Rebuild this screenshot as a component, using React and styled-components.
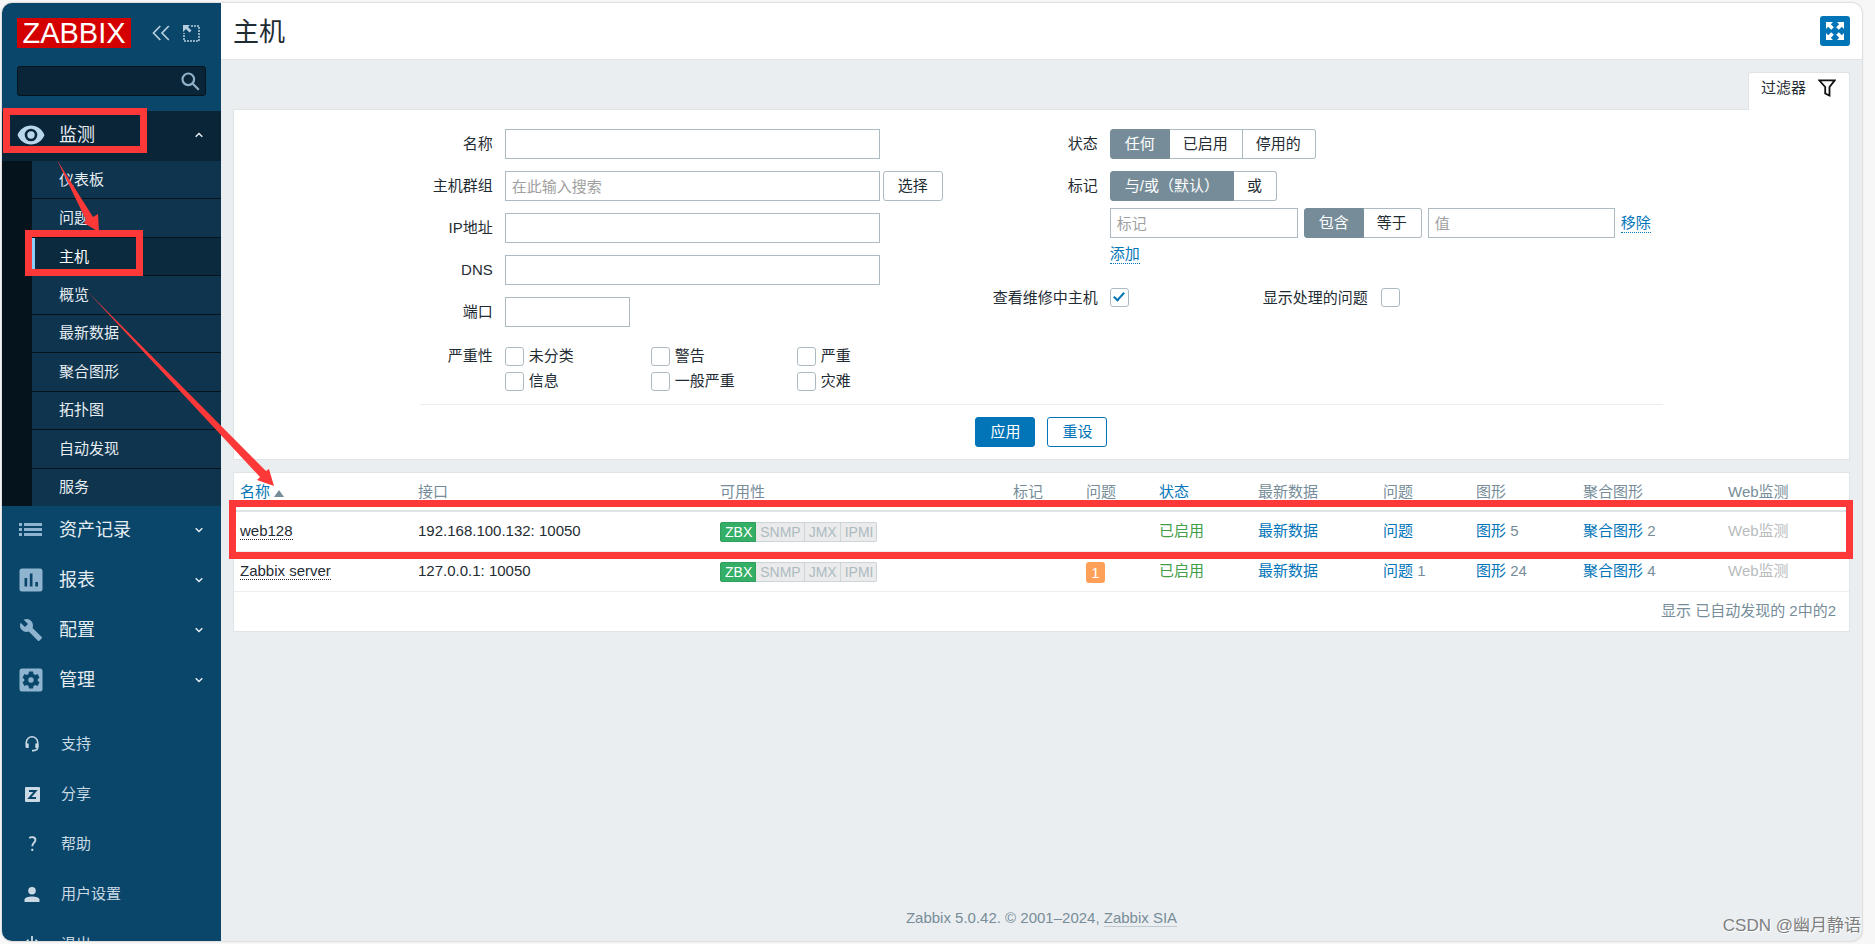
import React from 'react'
import styled, { createGlobalStyle, css } from 'styled-components'

const GlobalStyle = createGlobalStyle`
    *, *::before, *::after{
        box-sizing: border-box;
    }

    body{
        margin: 0;
        background: #f7f7f7;
        color: #1f2c33;
        font-family: "Liberation Sans", "Noto Sans CJK SC", sans-serif;
        font-size: 15px;
        line-height: 20px;
    }

    button, input{
        font: inherit;
        color: inherit;
    }

    a{
        text-decoration: none;
    }
`;

const Window = styled.div`
    position: relative;
    height: 100vh;
    padding: 3px 13px 3px 2px;
    overflow: hidden;
`;

const Frame = styled.div`
    display: flex;
    height: 100%;
    overflow: hidden;
    border-radius: 10px;
    background: #ebeef0;
    box-shadow: 0 0 2px rgba(0, 0, 0, .35);
`;

/* ---------- sidebar ---------- */

const Sidebar = styled.aside`
    flex: none;
    width: 219px;
    overflow: hidden;
    background: #0a466a;
    color: #e6edf2;
`;

const Brand = styled.div`
    display: flex;
    align-items: center;
    padding: 15px 15px 0;
`;

const Logo = styled.a`
    flex: none;
    width: 114px;
    height: 30px;
    margin-right: 21px;
    background: #d40000;
    color: #fff;
    font-size: 29px;
    line-height: 31px;
    text-align: center;
`;

const BrandButton = styled.button`
    display: flex;
    flex: none;
    margin-right: 13px;
    padding: 0;
    border: 0;
    background: none;
    color: #b6cede;
`;

const Search = styled.form`
    display: flex;
    align-items: center;
    height: 30px;
    margin: 18px 15px 15px;
    border: 1px solid #04131c;
    border-radius: 3px;
    background: #0a2537;

    input{
        flex: 1;
        min-width: 0;
        padding: 0 8px;
        border: 0;
        outline: 0;
        background: none;
        color: #fff;
    }

    button{
        display: flex;
        padding: 0 5px;
        border: 0;
        background: none;
        color: #8fb0c6;
    }
`;

const MenuLink = styled.a`
    display: flex;
    align-items: center;
    height: 50px;
    padding: 0 18px 2px 14px;
    color: #e6edf2;
    font-size: 18px;
    background: ${({ $open }) => $open ? '#0a2537' : 'none'};

    .icon{
        display: flex;
        justify-content: center;
        width: 30px;
        margin-right: 13px;
        color: ${({ $open }) => $open ? '#b9d7ea' : '#8fb4cf'};
    }

    .label{
        flex: 1;
    }
`;

const SubMenu = styled.nav`
    display: flex;
    flex-direction: column;
    height: 345px;
    padding-left: 30px;
    background: #04131c;
`;

const SubLink = styled.a`
    display: flex;
    flex: 1;
    align-items: center;
    padding-left: 27px;
    border-bottom: 1px solid #04131c;
    background: #0f344d;
    color: #e6edf2;

    ${({ $active }) => $active && css`
        padding-left: 24px;
        border-left: 3px solid #87cefa;
        background: #0b2a3e;
        color: #fff;
    `}

    &:last-child{
        border-bottom: 0;
    }
`;

const UserMenu = styled.nav`
    margin-top: 13px;
`;

const UserLink = styled.a`
    display: flex;
    align-items: center;
    height: 50px;
    padding-left: 22px;
    color: #c9dae5;

    .icon{
        display: flex;
        justify-content: center;
        width: 16px;
        margin-right: 21px;
    }
`;

/* ---------- page ---------- */

const Page = styled.main`
    display: flex;
    flex: 1;
    flex-direction: column;
    min-width: 0;
`;

const Header = styled.header`
    display: flex;
    align-items: center;
    justify-content: space-between;
    height: 57px;
    padding: 0 12px;
    border-bottom: 1px solid #dfe4e7;
    background: #fff;

    h1{
        margin: 0;
        padding-top: 2px;
        font-size: 26px;
        font-weight: 400;
        line-height: 36px;
    }
`;

const FullscreenButton = styled.button`
    display: flex;
    align-items: center;
    justify-content: center;
    width: 30px;
    height: 30px;
    margin-bottom: 1px;
    padding: 0;
    border: 0;
    border-radius: 3px;
    background: #0275b8;
    color: #fff;
`;

const Content = styled.div`
    flex: 1;
    padding: 12px 12px 0;
`;

const TabRow = styled.div`
    display: flex;
    justify-content: flex-end;
`;

const FilterTab = styled.button`
    display: flex;
    align-items: center;
    gap: 12px;
    height: 38px;
    margin-bottom: -1px;
    padding: 0 13px 8px 12px;
    border: 1px solid #dfe4e7;
    border-bottom: 0;
    border-radius: 3px 3px 0 0;
    background: #fff;
    z-index: 1;
`;

const Panel = styled.section`
    border: 1px solid #dfe4e7;
    background: #fff;
`;

const FilterBody = styled.form`
    width: 77%;
    min-width: 1243px;
    margin: 0 auto;
    padding: 19px 0 12px;
`;

const Columns = styled.div`
    display: flex;
    gap: 50px;
    padding-bottom: 13px;
    border-bottom: 1px solid #ebeef0;
`;

const FormColumn = styled.div`
    display: grid;
    grid-template-columns: ${({ $label }) => $label}px auto;
    column-gap: 12px;
    row-gap: 12px;
    align-content: start;
`;

const Label = styled.label`
    line-height: 29px;
    text-align: right;
    white-space: nowrap;
`;

const Field = styled.div`
    display: flex;
    align-items: center;
    gap: ${({ $gap }) => $gap || 0}px;
`;

const TextInput = styled.input`
    width: ${({ $width }) => $width}px;
    height: 30px;
    padding: 0 6px;
    border: 1px solid #acbbc2;
    border-radius: 0;
    background: #fff;

    &::placeholder{
        color: #a0a0a0;
        opacity: 1;
    }
`;

const Button = styled.button`
    width: 60px;
    height: 30px;
    padding: 0;
    border: 1px solid ${({ $kind }) => $kind ? '#0275b8' : '#acbbc2'};
    border-radius: 3px;
    background: ${({ $kind }) => $kind === 'primary' ? '#0275b8' : '#fff'};
    color: ${({ $kind }) => $kind === 'primary' ? '#fff' : $kind ? '#0275b8' : '#1f2c33'};
`;

const Segments = styled.div`
    display: flex;
    height: 30px;

    label{
        position: relative;
        padding: 0 14px 0 13px;
        border: 1px solid #acbbc2;
        border-left-width: 0;
        line-height: 28px;
        white-space: nowrap;
    }

    label:first-child{
        padding-left: 14px;
        border-left-width: 1px;
        border-radius: 3px 0 0 3px;
    }

    label:last-child{
        border-radius: 0 3px 3px 0;
    }

    label:has(input:checked){
        border-color: #768d99;
        background: #768d99;
        color: #fff;
    }

    input{
        position: absolute;
        inset: 0;
        margin: 0;
        opacity: 0;
    }
`;

const SeverityLabel = styled.span`
    margin-top: 7px;
    text-align: right;
`;

const Severities = styled.div`
    display: grid;
    grid-template-columns: repeat(3, 146px);
    row-gap: 5px;
    width: 438px;
    margin-top: 7px;

    label{
        display: flex;
        align-items: center;
        gap: 5px;
        height: 20px;
    }
`;

const Checkbox = styled.input`
    flex: none;
    width: 19px;
    height: 19px;
    margin: 0;
    appearance: none;
    border: 1px solid #acbbc2;
    border-radius: 3px;
    background: #fff;

    &:checked::after{
        content: "";
        display: block;
        width: 6px;
        height: 11px;
        margin: 1px auto 0;
        border: solid #0275b8;
        border-width: 0 2px 2px 0;
        transform: rotate(42deg);
    }
`;

const DottedLink = styled.a`
    border-bottom: 1px dotted;
    color: ${({ $dark }) => $dark ? '#1f2c33' : '#0275b8'};
    line-height: 18px;
`;

const TagRows = styled.div`
    display: flex;
    flex-direction: column;
    align-items: flex-start;
    gap: 7px;
`;

const Maintenance = styled(Field)`
    margin-top: 7px;

    label{
        margin: 0 13px 0 134px;
    }
`;

const MaintenanceLabel = styled(Label)`
    margin-top: 7px;
`;

const Actions = styled.div`
    display: flex;
    justify-content: center;
    gap: 12px;
    padding-top: 12px;
`;

/* ---------- hosts table ---------- */

const TablePanel = styled(Panel)`
    margin-top: 12px;
`;

const Table = styled.table`
    width: 100%;
    border-collapse: collapse;
    table-layout: fixed;

    th, td{
        padding: 0 6px;
        text-align: left;
        font-weight: 400;
        white-space: nowrap;
    }

    th{
        height: 38px;
        border-bottom: 2px solid #dfe4e7;
        color: #768d99;
    }

    td{
        height: 40px;
        border-bottom: 1px solid #ebeef0;
    }

    tfoot td{
        padding-right: 13px;
        border-bottom: 0;
        color: #768d99;
        text-align: right;
    }
`;

const Col = styled.col`
    width: ${({ $width }) => $width}px;
`;

const SortArrow = styled.span`
    display: inline-block;
    margin-left: 4px;
    border: 5px solid transparent;
    border-top: 0;
    border-bottom: 7px solid #768d99;
`;

const Link = styled.a`
    color: #0275b8;
`;

const Enabled = styled.a`
    color: #429e47;
`;

const Muted = styled.span`
    color: ${({ $light }) => $light ? '#b8bcbe' : '#768d99'};
`;

const Availability = styled.span`
    display: inline-flex;
    vertical-align: middle;

    span{
        height: 20px;
        padding: 0 3px 0 4px;
        border: 1px solid #ccd5d9;
        border-left-width: 0;
        background: #ebebeb;
        color: #acbbc2;
        font-size: 14px;
        line-height: 18px;
    }

    span:first-child{
        border: 1px solid #2f9f5e;
        border-radius: 2px 0 0 2px;
        background: #34af67;
        color: #fff;
    }

    span:last-child{
        border-radius: 0 2px 2px 0;
    }
`;

const ProblemCount = styled.a`
    display: inline-block;
    width: 19px;
    margin-top: 3px;
    border-radius: 3px;
    background: #ffa059;
    color: #fff;
    line-height: 21px;
    text-align: center;
`;

const Footer = styled.footer`
    padding-bottom: 13px;
    color: #768d99;
    text-align: center;

    a{
        border-bottom: 1px solid #c0cad0;
        color: #768d99;
    }
`;

const Watermark = styled.div`
    position: absolute;
    right: 14px;
    bottom: 6px;
    color: #7d7f80;
    font-size: 17px;
    line-height: 24px;
    text-shadow: 1px 1px 0 #fff;
`;

const Marks = styled.svg`
    position: absolute;
    top: 0;
    left: 0;
    pointer-events: none;
`;

const subItems = ['仪表板', '问题', '主机', '概览', '最新数据', '聚合图形', '拓扑图', '自动发现', '服务'];

const severities = ['未分类', '警告', '严重', '信息', '一般严重', '灾难'];

const columns = [
    { title: '名称', width: 178, sort: true, arrow: true },
    { title: '接口', width: 302 },
    { title: '可用性', width: 293 },
    { title: '标记', width: 73 },
    { title: '问题', width: 73 },
    { title: '状态', width: 99, sort: true },
    { title: '最新数据', width: 125 },
    { title: '问题', width: 93 },
    { title: '图形', width: 107 },
    { title: '聚合图形', width: 145 },
    { title: 'Web监测', width: 127 },
];

const hosts = [
    { name: 'web128', address: '192.168.100.132: 10050', graphs: 5, screens: 2 },
    { name: 'Zabbix server', address: '127.0.0.1: 10050', problems: 1, graphs: 24, screens: 4 },
];

const EyeIcon = () => (
    <svg width="28" height="20" viewBox="0 0 28 20" fill="currentColor">
        <path fillRule="evenodd" d="M14 0.5C7.8 0.5 2.6 4.400 0.500 10c2.100 5.600 7.300 9.500 13.500 9.500S25.400 15.600 27.500 10C25.400 4.400 20.200 0.500 14 0.500zm0 3.200a6.300 6.300 0 1 1 0 12.600 6.300 6.300 0 0 1 0-12.600zm0 2.600a3.700 3.700 0 1 0 0 7.400 3.700 3.700 0 0 0 0-7.400z" />
    </svg>
)

const ListIcon = () => (
    <svg width="24" height="14" viewBox="0 0 24 14" fill="currentColor">
        <path d="M0 0h3v3H0zM5 0h18v3H5zM0 5h3v3H0zM5 5h18v3H5zM0 10h3v3H0zM5 10h18v3H5z" />
    </svg>
)

const ChartIcon = () => (
    <svg width="24" height="24" viewBox="0 0 24 24" fill="currentColor">
        <path fillRule="evenodd" d="M3 .5h18A2.500 2.500 0 0 1 23.500 3v18a2.500 2.500 0 0 1-2.500 2.500H3A2.500 2.500 0 0 1 .5 21V3A2.500 2.500 0 0 1 3 .5zM5.500 10v8.500h2.700V10zm5.300-4.500v13h2.700v-13zm5.500 8.500v4.500H19V14z" />
    </svg>
)

const WrenchIcon = () => (
    <svg width="24" height="24" viewBox="0 0 24 24" fill="currentColor">
        <path d="M22.700 19l-9.100-9.100c.9-2.300.4-5-1.500-6.900-2-2-5-2.400-7.400-1.300L9 6 6 9 1.600 4.700C.4 7.100.9 10.100 2.900 12.100c1.900 1.900 4.600 2.400 6.900 1.500l9.100 9.100c.4.4 1 .4 1.400 0l2.300-2.300c.5-.4.5-1.100.1-1.400z" />
    </svg>
)

const GearIcon = () => (
    <svg width="24" height="24" viewBox="0 0 24 24" fill="currentColor">
        <path fillRule="evenodd" d="M3 .5h18A2.500 2.500 0 0 1 23.500 3v18a2.500 2.500 0 0 1-2.500 2.500H3A2.500 2.500 0 0 1 .5 21V3A2.500 2.500 0 0 1 3 .5zM10 3.500l-.5 2.400-1.700 1-2.300-.8-2 3.500L5.300 11.200v1.600L3.500 14.400l2 3.500 2.300-.8 1.700 1 .5 2.400h4l.5-2.400 1.700-1 2.300.8 2-3.500-1.800-1.600v-1.600l1.800-1.600-2-3.500-2.300.8-1.700-1-.5-2.400zm2 5.800a2.700 2.700 0 1 1 0 5.400 2.700 2.700 0 0 1 0-5.400z" />
    </svg>
)

const HeadsetIcon = () => (
    <svg width="14" height="16" viewBox="0 0 14 16" fill="none" stroke="currentColor" strokeWidth="1.600">
        <path d="M1.300 8V6.500a5.700 5.700 0 0 1 11.400 0V11c0 2.200-1.500 3.600-4.200 3.600H7" />
        <path d="M.5 7.500h3.200V12H2A1.500 1.500 0 0 1 .5 10.500zM13.500 7.500h-3.200V12H12a1.500 1.500 0 0 0 1.500-1.500z" fill="currentColor" stroke="none" />
    </svg>
)

const ShareIcon = () => (
    <svg width="15" height="15" viewBox="0 0 15 15">
        <rect width="15" height="15" rx="1" fill="currentColor" />
        <path d="M4 4h6.500L4.500 11H11" fill="none" stroke="#0a466a" strokeWidth="2" />
    </svg>
)

const HelpIcon = () => (
    <svg width="9" height="16" viewBox="0 0 9 16" fill="none" stroke="currentColor" strokeWidth="1.900">
        <path d="M1.200 1.900C3.500.6 7.400.7 7.400 3.900c0 2.700-3.100 2.900-3.100 6.300M4.300 12.700v2.200" />
    </svg>
)

const UserIcon = () => (
    <svg width="16" height="15" viewBox="0 0 16 15" fill="currentColor">
        <circle cx="8" cy="3.800" r="3.800" />
        <path d="M.5 15v-2.200C.5 10.600 4.500 9.600 8 9.600s7.500 1 7.500 3.200V15z" />
    </svg>
)

const PowerIcon = () => (
    <svg width="14" height="16" viewBox="0 0 14 16" fill="none" stroke="currentColor" strokeWidth="1.800">
        <path d="M7 0v8M3.500 3.800a6 6 0 1 0 7 0" />
    </svg>
)

const Chevron = ({ up }) => (
    <svg width="8" height="6" viewBox="0 0 8 6" fill="none" stroke="currentColor" strokeWidth="1.500">
        <path d={up ? 'M.7 4.800L4 1.500l3.300 3.300' : 'M.7 1.200L4 4.500l3.300-3.300'} />
    </svg>
)

const CollapseIcon = () => (
    <svg width="18" height="16" viewBox="0 0 18 16" fill="none" stroke="currentColor" strokeWidth="1.700">
        <path d="M8.300 1L1.500 8l6.800 7M16.800 1L10 8l6.800 7" />
    </svg>
)

const HideIcon = () => (
    <svg width="17" height="17" viewBox="0 0 17 17" fill="none" stroke="currentColor" strokeWidth="1.500">
        <path d="M8 1h8v15H1V8" strokeDasharray="2 1" />
        <path d="M0 0h7L5 2l3.500 3.500-2 2L3 4 0 7z" fill="currentColor" stroke="none" />
    </svg>
)

const SearchIcon = () => (
    <svg width="19" height="19" viewBox="0 0 19 19" fill="none" stroke="currentColor" strokeWidth="2.200">
        <circle cx="7.300" cy="7.300" r="5.800" />
        <path d="M11.500 11.500l6.300 6.300" />
    </svg>
)

const FullscreenIcon = () => (
    <svg width="18" height="18" viewBox="0 0 18 18" fill="currentColor">
        <path d="M0 0h7L4.800 2.200l3 3-2.600 2.600-3-3L0 7zM18 0v7l-2.200-2.200-3 3-2.600-2.600 3-3L11 0zM0 18v-7l2.200 2.200 3-3 2.600 2.600-3 3L7 18zM18 18h-7l2.200-2.200-3-3 2.600-2.600 3 3L18 11z" />
    </svg>
)

const FunnelIcon = () => (
    <svg width="18" height="18" viewBox="0 0 18 18" fill="none" stroke="#111" strokeWidth="1.800">
        <path d="M1.300 1.400h15.400L11.500 8v8.500l-4.300-2V8z" />
    </svg>
)

const menuItems = [
    { label: '资产记录', icon: <ListIcon /> },
    { label: '报表', icon: <ChartIcon /> },
    { label: '配置', icon: <WrenchIcon /> },
    { label: '管理', icon: <GearIcon /> },
];

const userItems = [
    { label: '支持', icon: <HeadsetIcon /> },
    { label: '分享', icon: <ShareIcon /> },
    { label: '帮助', icon: <HelpIcon /> },
    { label: '用户设置', icon: <UserIcon /> },
    { label: '退出', icon: <PowerIcon /> },
];

function SegmentedControl({ name, label, options }) {
    return (
        <Segments role="radiogroup" aria-label={label}>
            {options.map((option, i) => (
                <label key={option}>
                    <input type="radio" name={name} defaultChecked={i === 0} />
                    {option}
                </label>
            ))}
        </Segments>
    )
}

function SideNav() {
    return (
        <Sidebar>
            <Brand>
                <Logo href="#">ZABBIX</Logo>
                <BrandButton aria-label="收起"><CollapseIcon /></BrandButton>
                <BrandButton aria-label="隐藏"><HideIcon /></BrandButton>
            </Brand>
            <Search>
                <input type="text" aria-label="搜索" />
                <button type="button" aria-label="搜索"><SearchIcon /></button>
            </Search>
            <MenuLink href="#" $open>
                <span className="icon"><EyeIcon /></span>
                <span className="label">监测</span>
                <Chevron up />
            </MenuLink>
            <SubMenu>
                {subItems.map((item) => (
                    <SubLink key={item} href="#" $active={item === '主机'}>{item}</SubLink>
                ))}
            </SubMenu>
            {menuItems.map(({ label, icon }) => (
                <MenuLink key={label} href="#">
                    <span className="icon">{icon}</span>
                    <span className="label">{label}</span>
                    <Chevron />
                </MenuLink>
            ))}
            <UserMenu>
                {userItems.map(({ label, icon }) => (
                    <UserLink key={label} href="#">
                        <span className="icon">{icon}</span>
                        {label}
                    </UserLink>
                ))}
            </UserMenu>
        </Sidebar>
    )
}

function Filter() {
    return (
        <Panel>
            <FilterBody>
                <Columns>
                    <FormColumn $label={73}>
                        <Label htmlFor="name">名称</Label>
                        <Field><TextInput id="name" $width={375} /></Field>
                        <Label htmlFor="groups">主机群组</Label>
                        <Field $gap={3}>
                            <TextInput id="groups" $width={375} placeholder="在此输入搜索" />
                            <Button type="button">选择</Button>
                        </Field>
                        <Label htmlFor="ip">IP地址</Label>
                        <Field><TextInput id="ip" $width={375} /></Field>
                        <Label htmlFor="dns">DNS</Label>
                        <Field><TextInput id="dns" $width={375} /></Field>
                        <Label htmlFor="port">端口</Label>
                        <Field><TextInput id="port" $width={125} /></Field>
                        <SeverityLabel>严重性</SeverityLabel>
                        <Severities>
                            {severities.map((severity) => (
                                <label key={severity}>
                                    <Checkbox type="checkbox" />
                                    {severity}
                                </label>
                            ))}
                        </Severities>
                    </FormColumn>
                    <FormColumn $label={105}>
                        <Label as="span">状态</Label>
                        <SegmentedControl name="status" label="状态" options={['任何', '已启用', '停用的']} />
                        <Label as="span">标记</Label>
                        <TagRows>
                            <SegmentedControl name="evaltype" label="标记" options={['与/或（默认）', '或']} />
                            <Field $gap={6}>
                                <TextInput $width={188} placeholder="标记" aria-label="标记" />
                                <SegmentedControl name="operator" label="运算符" options={['包含', '等于']} />
                                <TextInput $width={187} placeholder="值" aria-label="值" />
                                <DottedLink href="#">移除</DottedLink>
                            </Field>
                            <DottedLink href="#">添加</DottedLink>
                        </TagRows>
                        <MaintenanceLabel htmlFor="maintenance">查看维修中主机</MaintenanceLabel>
                        <Maintenance>
                            <Checkbox id="maintenance" type="checkbox" defaultChecked />
                            <label htmlFor="suppressed">显示处理的问题</label>
                            <Checkbox id="suppressed" type="checkbox" />
                        </Maintenance>
                    </FormColumn>
                </Columns>
                <Actions>
                    <Button type="button" $kind="primary">应用</Button>
                    <Button type="reset" $kind="outline">重设</Button>
                </Actions>
            </FilterBody>
        </Panel>
    )
}

function HostTable() {
    return (
        <TablePanel>
            <Table>
                <colgroup>
                    {columns.map((column, i) => <Col key={i} $width={column.width} />)}
                </colgroup>
                <thead>
                    <tr>
                        {columns.map((column, i) => (
                            <th key={i}>
                                {column.sort ? <Link href="#">{column.title}</Link> : column.title}
                                {column.arrow && <SortArrow />}
                            </th>
                        ))}
                    </tr>
                </thead>
                <tbody>
                    {hosts.map((host) => (
                        <tr key={host.name}>
                            <td><DottedLink href="#" $dark>{host.name}</DottedLink></td>
                            <td>{host.address}</td>
                            <td>
                                <Availability>
                                    <span>ZBX</span>
                                    <span>SNMP</span>
                                    <span>JMX</span>
                                    <span>IPMI</span>
                                </Availability>
                            </td>
                            <td></td>
                            <td>{host.problems && <ProblemCount href="#">{host.problems}</ProblemCount>}</td>
                            <td><Enabled href="#">已启用</Enabled></td>
                            <td><Link href="#">最新数据</Link></td>
                            <td><Link href="#">问题</Link> <Muted>{host.problems}</Muted></td>
                            <td><Link href="#">图形</Link> <Muted>{host.graphs}</Muted></td>
                            <td><Link href="#">聚合图形</Link> <Muted>{host.screens}</Muted></td>
                            <td><Muted $light>Web监测</Muted></td>
                        </tr>
                    ))}
                </tbody>
                <tfoot>
                    <tr>
                        <td colSpan={columns.length}>显示 已自动发现的 2中的2</td>
                    </tr>
                </tfoot>
            </Table>
        </TablePanel>
    )
}

export default function App() {
    return (
        <Window>
            <GlobalStyle />
            <Frame>
                <SideNav />
                <Page>
                    <Header>
                        <h1>主机</h1>
                        <FullscreenButton aria-label="全屏"><FullscreenIcon /></FullscreenButton>
                    </Header>
                    <Content>
                        <TabRow>
                            <FilterTab>过滤器 <FunnelIcon /></FilterTab>
                        </TabRow>
                        <Filter />
                        <HostTable />
                    </Content>
                    <Footer>
                        Zabbix 5.0.42. © 2001–2024, <a href="#">Zabbix SIA</a>
                    </Footer>
                </Page>
            </Frame>
            <Watermark>CSDN @幽月静语</Watermark>
            <Marks width="1875" height="944" fill="none" stroke="#fc3838" strokeWidth="7">
                <rect x="6.500" y="111.500" width="137" height="38" />
                <rect x="28.500" y="233.500" width="111" height="39" />
                <rect x="232.500" y="503.500" width="1617" height="52" />
                <path d="M57 160L93 217l5-3 1 18-15-9 2-3z" fill="#fc3838" stroke="none" />
                <path d="M87 291L266 471l3-2 5 17-17-6 3-3z" fill="#fc3838" stroke="none" />
            </Marks>
        </Window>
    )
}
